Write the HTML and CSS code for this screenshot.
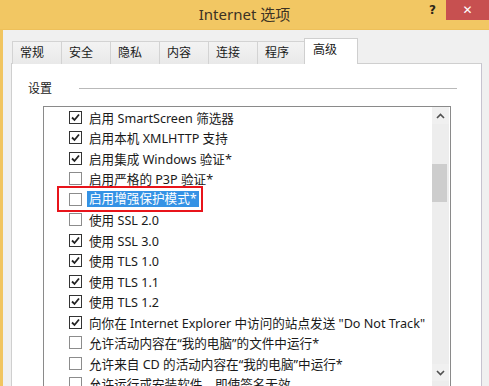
FILE: index.html
```html
<!DOCTYPE html>
<html lang="zh-CN">
<head>
    <meta charset="UTF-8">
    <meta name="viewport" content="width=device-width, initial-scale=1.0">
    <title>Internet 选项</title>
    <link rel="stylesheet" href="styles.css">
</head>
<body>
    <div class="window">
        <div class="titlebar">
            <span></span>
            <span class="title">Internet 选项</span>
            <div class="window-buttons">
                <span class="help">?</span>
                <span class="close">✕</span>
            </div>
        </div>

        <div class="content">
            <div class="tabs">
                <div class="tab">常规</div>
                <div class="tab">安全</div>
                <div class="tab">隐私</div>
                <div class="tab">内容</div>
                <div class="tab">连接</div>
                <div class="tab tab-narrow">程序</div>
                <div class="tab active">高级</div>
            </div>

            <div class="panel">
                <div class="group-head">
                    <span>设置</span>
                    <span class="group-line"></span>
                </div>

                <div class="listbox">
                    <ul class="options">
                        <li class="checked"><span class="box"></span>启用 SmartScreen 筛选器</li>
                        <li class="checked"><span class="box"></span>启用本机 XMLHTTP 支持</li>
                        <li class="checked"><span class="box"></span>启用集成 Windows 验证*</li>
                        <li><span class="box"></span>启用严格的 P3P 验证*</li>
                        <li class="selected"><span class="box"></span><span class="sel-text">启用增强保护模式*</span><span class="mark"></span></li>
                        <li><span class="box"></span>使用 SSL 2.0</li>
                        <li class="checked"><span class="box"></span>使用 SSL 3.0</li>
                        <li class="checked"><span class="box"></span>使用 TLS 1.0</li>
                        <li class="checked"><span class="box"></span>使用 TLS 1.1</li>
                        <li class="checked"><span class="box"></span>使用 TLS 1.2</li>
                        <li class="checked"><span class="box"></span>向你在 Internet Explorer 中访问的站点发送 "Do Not Track"</li>
                        <li><span class="box"></span>允许活动内容在“我的电脑”的文件中运行*</li>
                        <li><span class="box"></span>允许来自 CD 的活动内容在“我的电脑”中运行*</li>
                        <li><span class="box"></span>允许运行或安装软件，即使签名无效</li>
                    </ul>
                    <div class="scrollbar">
                        <div class="arrow">
                            <svg width="9" height="6" viewBox="0 0 9 6"><path d="M1 5 L4.5 1.5 L8 5" fill="none" stroke="#505050" stroke-width="1.6"/></svg>
                        </div>
                        <div class="track">
                            <div class="thumb"></div>
                        </div>
                        <div class="arrow arrow-down">
                            <svg width="9" height="6" viewBox="0 0 9 6"><path d="M1 1 L4.5 4.5 L8 1" fill="none" stroke="#505050" stroke-width="1.6"/></svg>
                        </div>
                    </div>
                </div>
            </div>
        </div>
    </div>
</body>
</html>
```

FILE: styles.css
```css
* {
    box-sizing: border-box;
    margin: 0;
    padding: 0;
}

body {
    width: 489px;
    height: 386px;
    overflow: hidden;
    background-color: #f0f0f0;
    font-family: "Noto Sans", "Noto Sans CJK SC", sans-serif;
    font-size: 12px;
    color: #1a1a1a;
}

.window {
    height: 386px;
    border-left: 3px solid #f1c560;
}

.titlebar {
    display: grid;
    grid-template-columns: 1fr auto 1fr;
    height: 30px;
    margin-left: -3px;
    background-color: #f2c763;
    border-bottom: 1px solid #eec05a;
}

.title {
    font-size: 15px;
    color: #3b3224;
    line-height: 28px;
}

.window-buttons {
    display: flex;
    justify-content: flex-end;
    align-items: flex-start;
}

.help {
    font-family: "DejaVu Sans", sans-serif;
    font-weight: bold;
    font-size: 12px;
    color: #2d2618;
    margin-top: 3px;
    margin-right: 10px;
}

.close {
    width: 43px;
    height: 20px;
    background-color: #c75050;
    color: #fff;
    font-family: "DejaVu Sans", sans-serif;
    font-weight: bold;
    font-size: 12px;
    line-height: 20px;
    text-align: center;
}

.content {
    padding: 8px 7px 0 8px;
}

.tabs {
    display: flex;
    align-items: flex-end;
    height: 26px;
    margin-left: 1px;
    position: relative;
    z-index: 1;
}

.tab {
    width: 50px;
    height: 23px;
    padding-left: 7px;
    line-height: 22px;
    background: linear-gradient(#f3f3f3, #e9e9e9);
    border: 1px solid #d3d3d3;
    border-bottom: none;
    margin-right: -1px;
}

.tab-narrow {
    width: 48px;
}

.tab.active {
    width: 54px;
    height: 26px;
    padding-left: 8px;
    line-height: 21px;
    background: #fff;
    border-color: #cfcfcf;
}

.panel {
    margin-top: -1px;
    height: 340px;
    background-color: #fff;
    border: 1px solid #cfcfcf;
    border-right-color: #c6c3cf;
}

.group-head {
    display: flex;
    align-items: center;
    height: 16px;
    margin-top: 16px;
    padding-left: 16px;
    padding-right: 24px;
    color: #222;
}

.group-line {
    flex: 1;
    height: 1px;
    margin-left: 27px;
    background-color: #b9b9b9;
}

.listbox {
    display: flex;
    height: 292px;
    margin: 10px 30px 0 31px;
    border: 1px solid #8a8a8a;
    overflow: hidden;
}

.options {
    flex: 1;
    list-style: none;
    font-size: 12.6px;
}

.options li {
    display: flex;
    align-items: center;
    height: 20.5px;
    white-space: nowrap;
    position: relative;
}

.box {
    width: 13px;
    height: 13px;
    margin-left: 25px;
    margin-right: 7px;
    border: 1px solid #8c8c8c;
    background-color: #fff;
    flex-shrink: 0;
}

.checked .box {
    border-color: #333;
    background: #fff url("data:image/svg+xml,%3Csvg xmlns='http://www.w3.org/2000/svg' width='11' height='11' viewBox='0 0 11 11'%3E%3Cpath d='M2 5.5 L4.5 8 L9 2.5' fill='none' stroke='%23222' stroke-width='1.8'/%3E%3C/svg%3E") center no-repeat;
}

.sel-text {
    margin-left: -2px;
    padding: 0 2px;
    line-height: 16px;
    background-color: #3492e5;
    color: #fff;
}

/* red annotation round the selected option */
.mark {
    position: absolute;
    left: 13px;
    top: -3px;
    width: 146px;
    height: 26px;
    border: 2px solid #e8141b;
}

.scrollbar {
    display: flex;
    flex-direction: column;
    width: 17px;
    margin-right: 1px;
    background-color: #ededed;
}

.arrow {
    display: flex;
    justify-content: center;
    align-items: center;
    height: 17px;
    background-color: #f0f0f0;
}

.arrow-down {
    margin-bottom: 16px;
}

.track {
    flex: 1;
    padding-top: 40px;
}

.thumb {
    width: 15px;
    height: 38px;
    background-color: #cdcdcd;
}
```
